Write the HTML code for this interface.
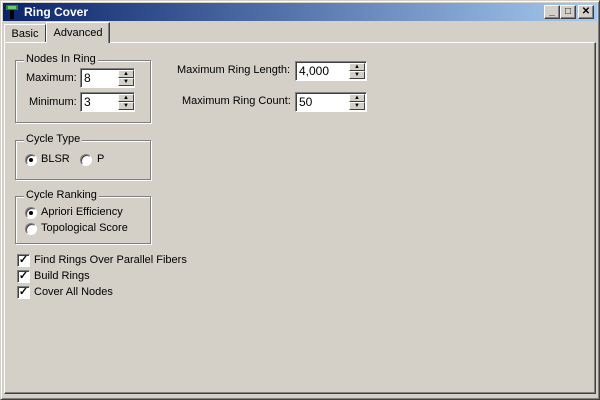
<!DOCTYPE html><html><head><style>
*{margin:0;padding:0;box-sizing:border-box}
body{width:600px;height:400px;background:#d4d0c8;font-family:"Liberation Sans",sans-serif;font-size:11px;color:#000;position:relative;overflow:hidden}
.a{position:absolute}
.win{left:0;top:0;width:600px;height:400px;border:1px solid;border-color:#d4d0c8 #404040 #404040 #d4d0c8;box-shadow:inset 1px 1px #fff,inset -1px -1px #808080}
.title{left:3px;top:3px;width:594px;height:18px;background:linear-gradient(90deg,#0a246a,#a6caf0);color:#fff;font-weight:bold;font-size:12px;line-height:18px;padding-left:21px}
.tb{top:5px;width:16px;height:14px;background:#d4d0c8;border:1px solid;border-color:#fff #404040 #404040 #fff;box-shadow:inset -1px -1px #808080;font-size:10px;line-height:12px;text-align:center;font-weight:bold}
.panel{left:4px;top:42px;width:592px;height:352px;border:1px solid;border-color:#fff #404040 #404040 #fff;box-shadow:inset -1px -1px #808080}
.tab{height:20px;border:1px solid;border-bottom:none;border-color:#fff #404040 #404040 #fff;font-size:11px;text-align:center;background:#d4d0c8}
.grp{border:1px solid #808080;box-shadow:1px 1px #fff,inset 1px 1px #fff}
.gt{background:#d4d0c8;padding:0 2px}
.inp{background:#fff;border:1px solid;border-color:#808080 #fff #fff #808080;box-shadow:inset 1px 1px #404040;padding:2px 0 0 3px;font-size:12px}
.sp{width:16px;height:8px;background:#d4d0c8;border:1px solid;border-color:#fff #404040 #404040 #fff;font-size:6px;line-height:6px;text-align:center}
.rad{width:12px;height:12px;border-radius:50%;background:#fff;border:1px solid;border-color:#808080 #fff #fff #808080;box-shadow:inset 1px 1px #404040}
.rad.on::after{content:"";position:absolute;left:3px;top:3px;width:4px;height:4px;border-radius:50%;background:#000}
.cb{width:13px;height:13px;background:#fff;border:1px solid;border-color:#808080 #fff #fff #808080;box-shadow:inset 1px 1px #404040;font-size:11px;line-height:11px;text-align:center;font-weight:bold}
</style></head><body>
<div class="a win"></div>
<div class="a title">Ring Cover</div>
<svg class="a" style="left:5px;top:4px" width="14" height="16"><rect x="1" y="1" width="12" height="5" fill="#2a8a2a"/><rect x="5" y="6" width="4" height="9" fill="#000"/><rect x="3" y="2" width="8" height="3" fill="#6c6"/></svg>
<div class="a tb" style="left:544px">_</div>
<div class="a tb" style="left:560px">□</div>
<div class="a tb" style="left:578px">✕</div>
<div class="a panel"></div>
<div class="a tab" style="left:4px;top:24px;width:42px;height:18px;line-height:19px">Basic</div>
<div class="a tab" style="left:46px;top:22px;width:64px;height:21px;line-height:20px;box-shadow:inset -1px 0 #808080">Advanced</div>

<div class="a grp" style="left:15px;top:60px;width:136px;height:63px"></div>
<div class="a gt" style="left:24px;top:53px;font-size:11px">Nodes In Ring</div>
<div class="a" style="left:26px;top:72px">Maximum:</div>
<div class="a inp" style="left:80px;top:68px;width:55px;height:20px">8</div>
<div class="a sp" style="left:118px;top:70px">▲</div><div class="a sp" style="left:118px;top:78px">▼</div>
<div class="a" style="left:29px;top:96px">Minimum:</div>
<div class="a inp" style="left:80px;top:92px;width:55px;height:20px">3</div>
<div class="a sp" style="left:118px;top:94px">▲</div><div class="a sp" style="left:118px;top:102px">▼</div>

<div class="a" style="left:177px;top:64px">Maximum Ring Length:</div>
<div class="a inp" style="left:295px;top:61px;width:72px;height:20px">4,000</div>
<div class="a sp" style="left:349px;top:63px">▲</div><div class="a sp" style="left:349px;top:71px">▼</div>
<div class="a" style="left:182px;top:95px">Maximum Ring Count:</div>
<div class="a inp" style="left:295px;top:92px;width:72px;height:20px">50</div>
<div class="a sp" style="left:349px;top:94px">▲</div><div class="a sp" style="left:349px;top:102px">▼</div>

<div class="a grp" style="left:15px;top:140px;width:136px;height:40px"></div>
<div class="a gt" style="left:24px;top:133px">Cycle Type</div>
<div class="a rad on" style="left:25px;top:154px"></div><div class="a" style="left:41px;top:153px">BLSR</div>
<div class="a rad" style="left:80px;top:154px"></div><div class="a" style="left:97px;top:153px">P</div>

<div class="a grp" style="left:15px;top:196px;width:136px;height:48px"></div>
<div class="a gt" style="left:24px;top:189px">Cycle Ranking</div>
<div class="a rad on" style="left:25px;top:207px"></div><div class="a" style="left:41px;top:206px">Apriori Efficiency</div>
<div class="a rad" style="left:25px;top:223px"></div><div class="a" style="left:41px;top:222px">Topological Score</div>

<div class="a cb" style="left:17px;top:254px">✓</div><div class="a" style="left:34px;top:254px">Find Rings Over Parallel Fibers</div>
<div class="a cb" style="left:17px;top:270px">✓</div><div class="a" style="left:34px;top:270px">Build Rings</div>
<div class="a cb" style="left:17px;top:286px">✓</div><div class="a" style="left:34px;top:286px">Cover All Nodes</div>
</body></html>
